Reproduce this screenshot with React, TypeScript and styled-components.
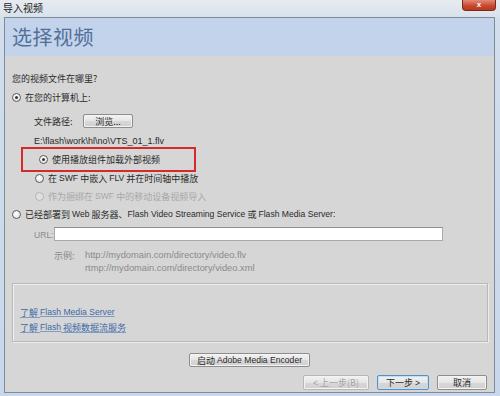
import React from "react";
import styled, { createGlobalStyle } from "styled-components";

const Global = createGlobalStyle`
  html, body { margin: 0; padding: 0; }
  body { width: 500px; height: 396px; overflow: hidden; background: #c9d8ec; }
  * { box-sizing: border-box; }
`;

const CJK = `"Noto Sans CJK SC", "Liberation Sans", sans-serif`;
const LAT = `"Liberation Sans", "Noto Sans CJK SC", sans-serif`;

const Window = styled.div`
  width: 500px;
  height: 396px;
  display: flex;
  flex-direction: column;
  background: linear-gradient(180deg, #dde6ef 0px, #d2deec 20px, #c8d7eb 100%);
  font-family: ${CJK};
  color: #2a2a2a;
`;

const TitleBar = styled.div`
  height: 17px;
  display: flex;
  justify-content: space-between;
  align-items: flex-start;
  padding: 0 4px 0 3px;
  background: linear-gradient(180deg, #e6ebf0, #d9e2eb);
`;

const TitleText = styled.span`
  font-size: 10px;
  line-height: 15px;
  color: #222;
`;

const CloseBtn = styled.div`
  width: 34px;
  height: 11px;
  border-radius: 0 0 4px 4px;
  background: linear-gradient(180deg, #e08a78, #c9452c 60%, #b83a22);
  border: 1px solid #7a2a1c;
  border-top: none;
  color: #fff;
  font: bold 8px/9px ${LAT};
  text-align: center;
`;

const Frame = styled.div`
  flex: 1;
  margin: 0 5px 3px 4px;
  border: 1px solid #7f8b99;
  display: flex;
  flex-direction: column;
  background: #d6d6d6;
`;

const Header = styled.div`
  height: 38px;
  flex: none;
  background: #c2d3eb;
  border-bottom: 1px solid #c8d3e0;
  padding-left: 7px;
  display: flex;
  align-items: center;
  font-size: 20px;
  color: #52709a;
  letter-spacing: 0.5px;
`;

const Body = styled.div`
  flex: 1;
  display: flex;
  flex-direction: column;
  padding: 0 5px 0 7px;
  font-size: 9px;
`;

const Row = styled.div<{ $mt: number; $h?: number; $indent?: number; $muted?: boolean }>`
  margin-top: ${(p) => p.$mt}px;
  height: ${(p) => p.$h ?? 12}px;
  padding-left: ${(p) => p.$indent ?? 0}px;
  display: flex;
  align-items: center;
  white-space: nowrap;
  color: ${(p) => (p.$muted ? "#a8a8a8" : "#2a2a2a")};
`;

const Lat = styled.span<{ $size?: number }>`
  font-family: ${LAT};
  font-size: ${(p) => p.$size ?? 8.6}px;
`;

const Radio = styled.span<{ $on?: boolean; $disabled?: boolean }>`
  width: 9px;
  height: 9px;
  border-radius: 50%;
  border: 1px solid ${(p) => (p.$disabled ? "#b4b4b4" : "#5b5b5b")};
  background: ${(p) => (p.$disabled ? "#e0e0e0" : "radial-gradient(circle at 40% 35%, #ffffff, #dcdcdc)")};
  margin-right: 4px;
  flex: none;
  display: flex;
  align-items: center;
  justify-content: center;
  &::after {
    content: "";
    width: 3px;
    height: 3px;
    border-radius: 50%;
    background: #333;
    display: ${(p) => (p.$on ? "block" : "none")};
  }
`;

const Button = styled.div<{ $w: number; $focus?: boolean; $disabled?: boolean }>`
  width: ${(p) => p.$w}px;
  height: 100%;
  border: 1px solid ${(p) => (p.$focus ? "#5d8ec2" : p.$disabled ? "#b6b6b6" : "#8d8d8d")};
  box-shadow: inset 0 0 0 1px ${(p) => (p.$focus ? "#bfe0f5" : "#f4f4f4")};
  border-radius: 2px;
  background: linear-gradient(180deg, #f2f2f2, #e6e6e6 50%, #d8d8d8 51%, #d0d0d0);
  display: flex;
  align-items: center;
  justify-content: center;
  color: ${(p) => (p.$disabled ? "#a4a4a4" : "#2a2a2a")};
  font-size: 9px;
  flex: none;
`;

const Label = styled.span<{ $w?: number }>`
  display: inline-block;
  width: ${(p) => (p.$w ? `${p.$w}px` : "auto")};
  flex: none;
`;

const RedBox = styled.div`
  margin-left: 9px;
  width: 175px;
  height: 25px;
  border: 2px solid #d42a2a;
  display: flex;
  align-items: center;
  padding-left: 16px;
  flex: none;
`;

const Input = styled.div`
  width: 389px;
  height: 14px;
  background: #fff;
  border: 1px solid #a9a9a9;
  border-top-color: #8f8f8f;
`;

const Muted = styled.span`
  color: #8a8a8a;
`;

const GroupBox = styled.div`
  margin-top: 9px;
  margin-right: 1px;
  height: 59px;
  border: 1px solid #b9b9b9;
  box-shadow: inset 1px 1px 0 #efefef, 1px 1px 0 #ededed;
  padding: 22px 0 0 7px;
  display: flex;
  flex-direction: column;
  gap: 3px;
`;

const Link = styled.a`
  height: 12px;
  display: flex;
  align-items: center;
  color: #3d6aa6;
  text-decoration: underline;
  text-decoration-color: #7d9cc4;
  white-space: nowrap;
  cursor: pointer;
`;

const Center = styled.div<{ $mt: number; $h: number }>`
  margin-top: ${(p) => p.$mt}px;
  height: ${(p) => p.$h}px;
  display: flex;
  justify-content: center;
  padding-right: 2px;
`;

const Footer = styled.div`
  margin-top: 8px;
  height: 15px;
  display: flex;
  justify-content: flex-end;
  gap: 8px;
  padding-right: 2px;
`;

export default function App() {
  return (
    <>
      <Global />
      <Window>
        <TitleBar>
          <TitleText>导入视频</TitleText>
          <CloseBtn>x</CloseBtn>
        </TitleBar>
        <Frame>
          <Header>选择视频</Header>
          <Body>
            <Row $mt={16}>您的视频文件在哪里?</Row>
            <Row $mt={7}>
              <Radio $on />
              在您的计算机上:
            </Row>
            <Row $mt={11} $h={14} $indent={22}>
              <Label $w={49}>文件路径:</Label>
              <Button $w={50}>浏览...</Button>
            </Row>
            <Row $mt={7} $h={12} $indent={22}>
              <Lat $size={9}>E:\flash\work\hl\no\VTS_01_1.flv</Lat>
            </Row>
            <RedBox>
              <Radio $on />
              使用播放组件加载外部视频
            </RedBox>
            <Row $mt={0} $indent={23}>
              <Radio />
              在&nbsp;<Lat>SWF</Lat>&nbsp;中嵌入&nbsp;<Lat>FLV</Lat>&nbsp;并在时间轴中播放
            </Row>
            <Row $mt={6} $indent={23} $muted>
              <Radio $disabled />
              作为捆绑在&nbsp;<Lat>SWF</Lat>&nbsp;中的移动设备视频导入
            </Row>
            <Row $mt={6}>
              <Radio />
              已经部署到&nbsp;<Lat>Web</Lat>&nbsp;服务器、<Lat>Flash Video Streaming Service</Lat>&nbsp;或&nbsp;
              <Lat>Flash Media Server:</Lat>
            </Row>
            <Row $mt={7} $h={14} $indent={22}>
              <Label $w={20}>
                <Lat>
                  <Muted>URL:</Muted>
                </Lat>
              </Label>
              <Input />
            </Row>
            <Row $mt={8} $indent={42}>
              <Label $w={31}>
                <Muted>示例:</Muted>
              </Label>
              <Lat $size={9.3}>
                <Muted>http://mydomain.com/directory/video.flv</Muted>
              </Lat>
            </Row>
            <Row $mt={1} $indent={73}>
              <Lat $size={9.3}>
                <Muted>rtmp://mydomain.com/directory/video.xml</Muted>
              </Lat>
            </Row>
            <GroupBox>
              <Link>
                了解&nbsp;<Lat>Flash Media Server</Lat>
              </Link>
              <Link>
                了解&nbsp;<Lat>Flash</Lat>&nbsp;视频数据流服务
              </Link>
            </GroupBox>
            <Center $mt={11} $h={14}>
              <Button $w={121}>
                启动&nbsp;<Lat>Adobe Media Encoder</Lat>
              </Button>
            </Center>
            <Footer>
              <Button $w={66} $disabled>
                <Lat>&lt;</Lat>&nbsp;上一步(B)
              </Button>
              <Button $w={52} $focus>
                下一步&nbsp;<Lat>&gt;</Lat>
              </Button>
              <Button $w={50}>取消</Button>
            </Footer>
          </Body>
        </Frame>
      </Window>
    </>
  );
}
